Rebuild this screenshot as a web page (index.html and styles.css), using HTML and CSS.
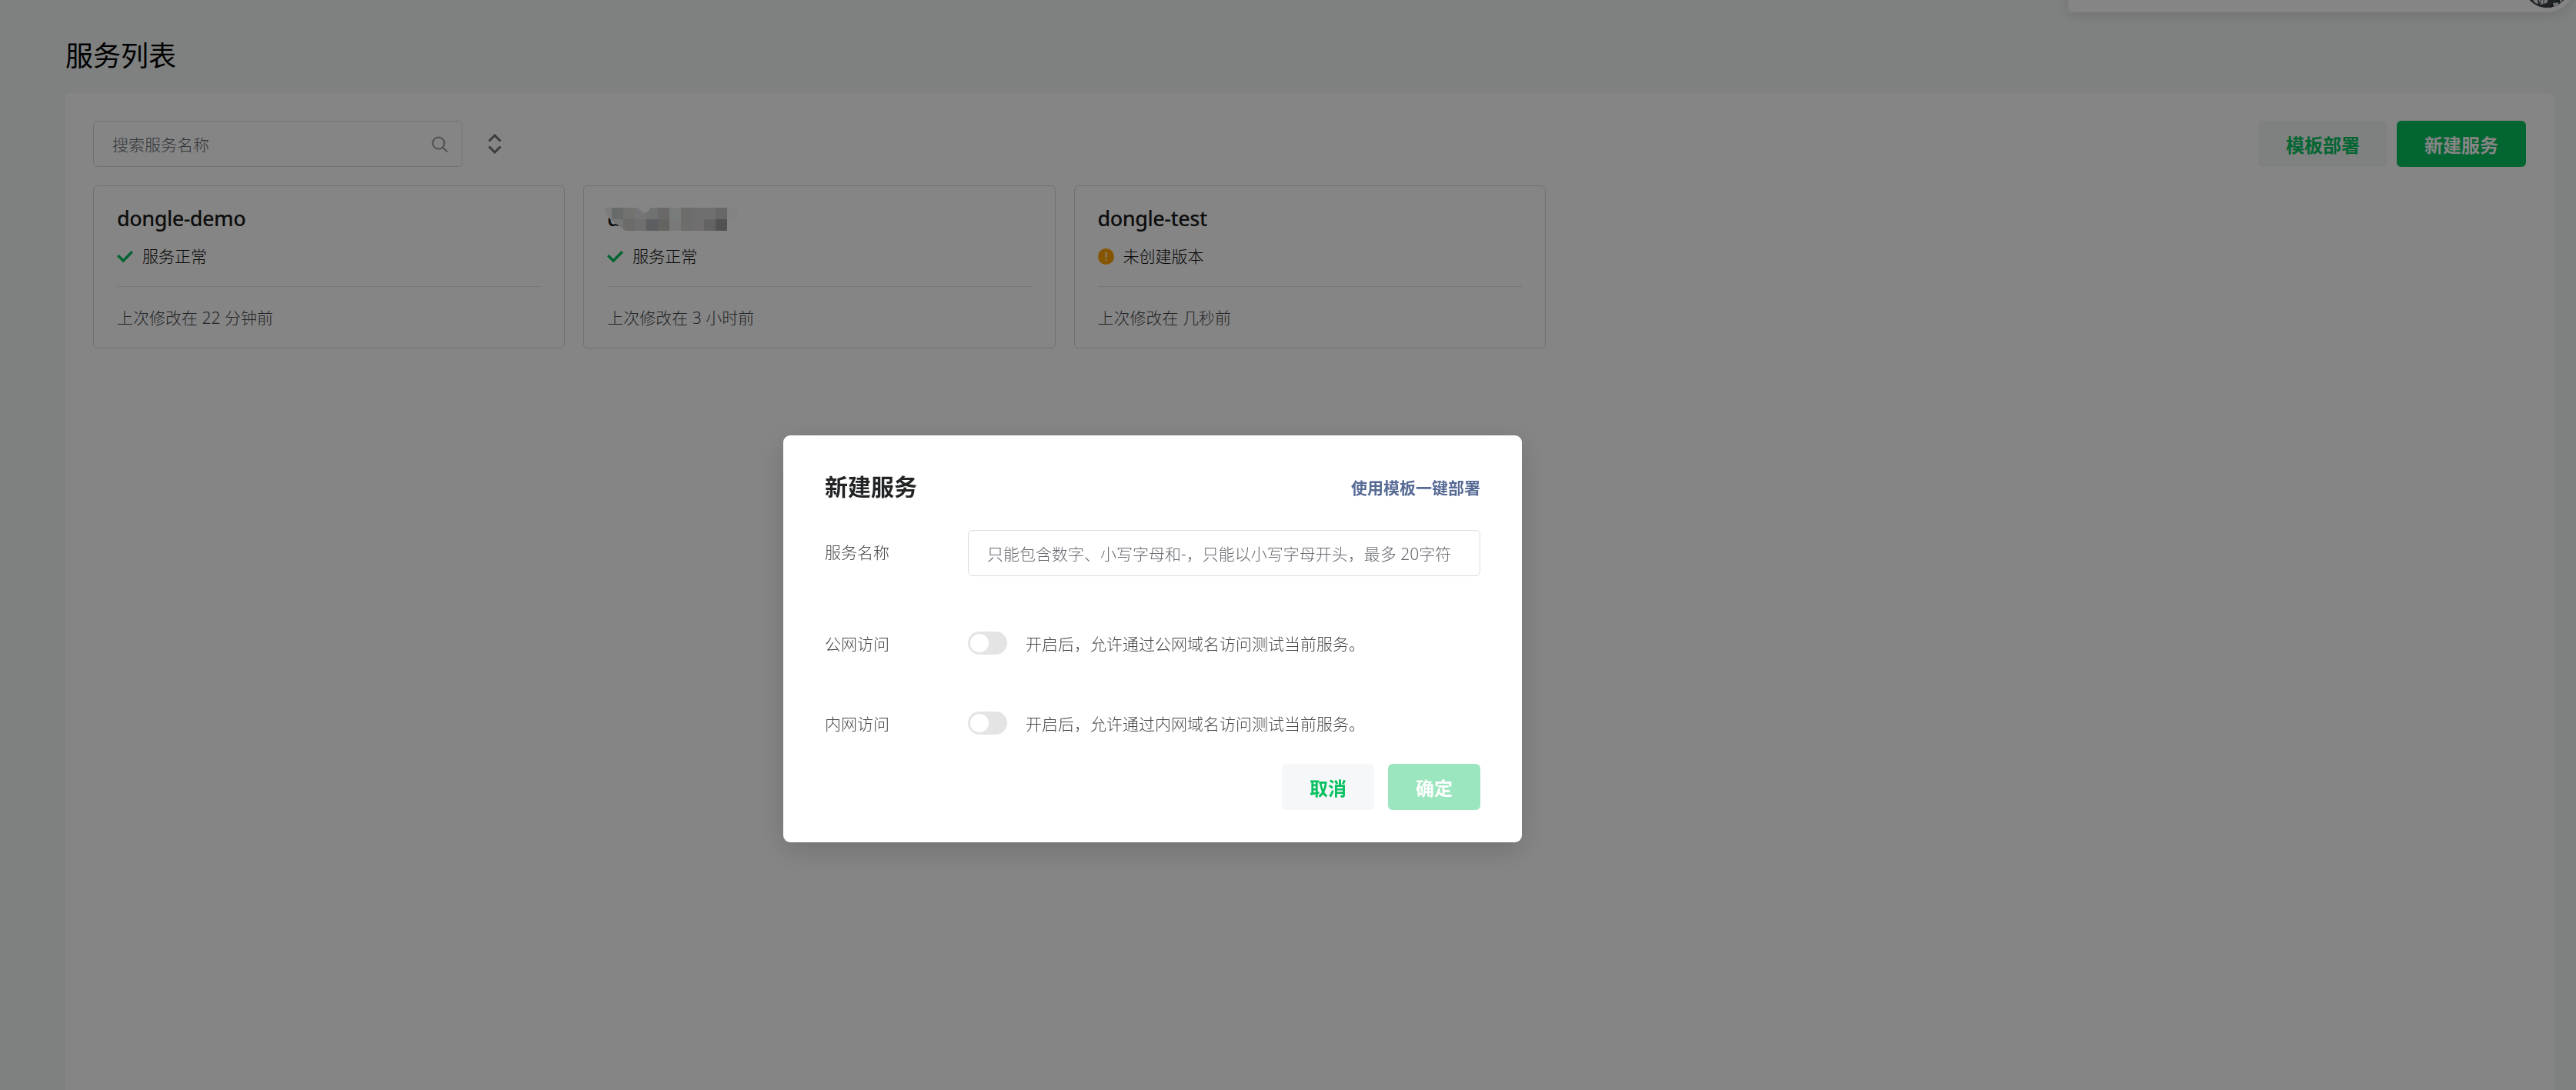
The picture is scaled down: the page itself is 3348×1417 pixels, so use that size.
FILE: index.html
```html
<!DOCTYPE html>
<html lang="zh-CN">
<head>
    <meta charset="UTF-8">
    <meta name="viewport" content="width=device-width, initial-scale=1.0">
    <title>服务列表</title>
    <link rel="stylesheet" href="styles.css">
</head>
<body>
    <div class="user-bar">
        <svg class="avatar" viewBox="0 0 60 60">
            <circle cx="30" cy="30" r="30" fill="#3c444a"/>
            <path d="M12 50h6l1 5-4-1zM19 49h13l-2 5-8 2z" fill="#e4e4e4"/>
            <path d="M22 49v6M26 49v7" stroke="#555" stroke-width="1"/>
            <path d="M33 60q6-8 14-10l-5 8z" fill="#26313a"/>
            <path d="M38 54l7-1v5l-6 1zM47 50l4-1-3 5z" fill="#d5d5de"/>
        </svg>
    </div>

    <header>
        <h1>服务列表</h1>
    </header>
    <main class="panel">
        <div class="toolbar">
            <div class="search">
                <input type="text" placeholder="搜索服务名称">
                <svg class="search-icon" viewBox="0 0 22 22">
                    <circle cx="9" cy="9" r="7.6"/>
                    <path d="M14 14.5l6.5 6"/>
                </svg>
            </div>
            <svg class="sort-icon" viewBox="0 0 18 26">
                <path d="M1.5 9.5L9 2l7.5 7.5M1.5 16.5L9 24l7.5-7.5"/>
            </svg>
            <div class="actions">
                <button class="btn btn-default">模板部署</button>
                <button class="btn btn-primary">新建服务</button>
            </div>
        </div>

        <div class="cards">
            <div class="card">
                <h2>dongle-demo</h2>
                <div class="status">
                    <svg class="status-icon" viewBox="0 0 21 21"><path class="check" d="M1.2 9l7 7L19.8 4.2"/></svg>
                    <span>服务正常</span>
                </div>
                <p class="updated">上次修改在 22 分钟前</p>
            </div>
            <div class="card">
                <h2>do
                    <svg class="mosaic" viewBox="0 0 174 30">
                        <clipPath id="brush"><path d="M0 0h42l8 6h5l5-6h114v16h-15v14H27L8 16 2 9z"/></clipPath>
                        <g clip-path="url(#brush)">
                            <rect x="0" y="0" width="9" height="30" fill="#f0f0f0"/>
                            <rect x="9" y="0" width="15" height="15" fill="#c6cecc"/>
                            <rect x="24" y="0" width="15" height="15" fill="#dbdbd5"/>
                            <rect x="39" y="0" width="15" height="15" fill="#e1e1e1"/>
                            <rect x="54" y="0" width="15" height="15" fill="#d4dbd9"/>
                            <rect x="69" y="0" width="15" height="15" fill="#cacaca"/>
                            <rect x="84" y="0" width="15" height="15" fill="#e6efed"/>
                            <rect x="99" y="0" width="15" height="15" fill="#d2d2ce"/>
                            <rect x="114" y="0" width="30" height="15" fill="#d5d5d5"/>
                            <rect x="144" y="0" width="15" height="15" fill="#c8c8c8"/>
                            <rect x="159" y="0" width="15" height="16" fill="#fcfcfc"/>
                            <rect x="9" y="15" width="15" height="15" fill="#dfe7e5"/>
                            <rect x="24" y="15" width="15" height="15" fill="#d0ceca"/>
                            <rect x="39" y="15" width="15" height="15" fill="#d5d5d5"/>
                            <rect x="54" y="15" width="15" height="15" fill="#b1b5bb"/>
                            <rect x="69" y="15" width="15" height="15" fill="#c4c0bb"/>
                            <rect x="84" y="15" width="15" height="15" fill="#e8e8e8"/>
                            <rect x="99" y="15" width="15" height="15" fill="#d2d2ce"/>
                            <rect x="114" y="15" width="15" height="15" fill="#d9d4d7"/>
                            <rect x="129" y="15" width="15" height="15" fill="#bebebe"/>
                            <rect x="144" y="15" width="15" height="15" fill="#9e9e9e"/>
                        </g>
                    </svg>
                </h2>
                <div class="status">
                    <svg class="status-icon" viewBox="0 0 21 21"><path class="check" d="M1.2 9l7 7L19.8 4.2"/></svg>
                    <span>服务正常</span>
                </div>
                <p class="updated">上次修改在 3 小时前</p>
            </div>
            <div class="card">
                <h2>dongle-test</h2>
                <div class="status">
                    <svg class="status-icon" viewBox="0 0 21 21">
                        <circle cx="10.5" cy="10.5" r="10.5" fill="#ffa300"/>
                        <path d="M10.5 5v7M10.5 14v2" stroke="#fff" stroke-width="1.8" fill="none"/>
                    </svg>
                    <span>未创建版本</span>
                </div>
                <p class="updated">上次修改在 几秒前</p>
            </div>
        </div>
    </main>

    <div class="overlay">
        <div class="dialog">
            <div class="dialog-header">
                <h3>新建服务</h3>
                <a class="template-link">使用模板一键部署</a>
            </div>
            <div class="form-row name-row">
                <label>服务名称</label>
                <input type="text" placeholder="只能包含数字、小写字母和-，只能以小写字母开头，最多 20字符">
            </div>
            <div class="form-row">
                <label>公网访问</label>
                <span class="switch"></span>
                <span class="hint">开启后，允许通过公网域名访问测试当前服务。</span>
            </div>
            <div class="form-row">
                <label>内网访问</label>
                <span class="switch"></span>
                <span class="hint">开启后，允许通过内网域名访问测试当前服务。</span>
            </div>
            <div class="dialog-footer">
                <button class="btn btn-default">取消</button>
                <button class="btn btn-primary disabled">确定</button>
            </div>
        </div>
    </div>
</body>
</html>
```
FILE: styles.css
```css
* {
    box-sizing: border-box;
}
body {
    margin: 0;
    height: 1417px;
    overflow: hidden;
    padding: 0 29px 0 85px;
    display: flex;
    flex-direction: column;
    background-color: #f4f8f6;
    color: #1a1a1a;
    font-family: "Noto Sans", "Noto Sans CJK SC", sans-serif;
    font-size: 21px;
    font-weight: 300;
}
h1, h2, h3, p {
    margin: 0;
}
input, button {
    font-family: inherit;
}
.user-bar {
    position: absolute;
    top: -56px;
    right: 2px;
    width: 658px;
    height: 72px;
    padding: 6px;
    display: flex;
    justify-content: flex-end;
    background-color: #fff;
    border-radius: 5px 36px 36px 5px;
    box-shadow: 0 4px 18px rgba(0, 0, 0, 0.12);
}
.avatar {
    width: 60px;
    height: 60px;
}
header {
    height: 121px;
    padding-top: 47px;
}
h1 {
    font-size: 36px;
    font-weight: 400;
    line-height: 52px;
    color: #000;
}
.panel {
    flex: 1;
    padding: 36px;
    background-color: #fff;
    border-radius: 6px 6px 0 0;
}
.toolbar {
    display: flex;
    align-items: center;
    margin-bottom: 24px;
}
.search {
    position: relative;
    width: 480px;
}
input {
    width: 100%;
    height: 60px;
    padding: 2px 24px 0;
    border: 1px solid #dcdddf;
    border-radius: 6px;
    background-color: #fff;
    font-size: 21px;
    font-weight: 300;
}
input::placeholder {
    color: #66696f;
    opacity: 1;
}
.search-icon {
    position: absolute;
    top: 20px;
    right: 18px;
    width: 22px;
    height: 22px;
    fill: none;
    stroke: #9a9a9a;
    stroke-width: 2;
}
.sort-icon {
    width: 18px;
    height: 26px;
    margin-left: 33px;
    fill: none;
    stroke: #767676;
    stroke-width: 3;
}
.actions {
    display: flex;
    gap: 12px;
    margin-left: auto;
}
.btn {
    height: 60px;
    padding: 0 36px;
    border: none;
    border-radius: 6px;
    font-size: 24px;
    font-weight: 700;
}
.btn-default {
    background-color: #f6f7f9;
    color: #07c160;
}
.toolbar .btn-default {
    background-color: #f4f8f6;
}
.btn-primary {
    background-color: #07c160;
    color: #fff;
}
.btn-primary.disabled {
    background-color: #9ce6bf;
}
.cards {
    display: grid;
    grid-template-columns: repeat(3, 613.3px);
    gap: 24px;
}
.card {
    height: 212px;
    padding: 24px 30px;
    border: 1px solid #d8d9da;
    border-radius: 6px;
}
h2 {
    position: relative;
    font-size: 27px;
    font-weight: 500;
    line-height: 36px;
    letter-spacing: -0.5px;
}
.mosaic {
    position: absolute;
    top: 4px;
    left: -3px;
    width: 174px;
    height: 30px;
}
.status {
    display: flex;
    align-items: center;
    gap: 12px;
    height: 30px;
    margin-top: 16px;
    color: #0c0c0e;
}
.status span {
    margin-top: -3px;
}
.status-icon {
    width: 21px;
    height: 21px;
}
.check {
    fill: none;
    stroke: #07c160;
    stroke-width: 3.4;
}
.updated {
    margin-top: 24px;
    padding-top: 25px;
    border-top: 1px solid #e2e3e4;
    line-height: 30px;
    color: #45484e;
}
.overlay {
    position: fixed;
    inset: 0;
    display: flex;
    background-color: rgba(0, 0, 0, 0.48);
}
.dialog {
    width: 960px;
    height: 529px;
    margin: 566px 0 0 1018px;
    padding: 42px 54px;
    background-color: #fff;
    border-radius: 9px;
    box-shadow: 0 10px 36px rgba(0, 0, 0, 0.16);
}
.dialog-header {
    display: flex;
    justify-content: space-between;
    align-items: center;
    height: 48px;
}
h3 {
    padding-bottom: 3px;
    font-size: 30px;
    font-weight: 700;
    color: #222426;
}
.template-link {
    padding-top: 2px;
    color: #576b95;
    font-weight: 700;
}
.form-row {
    display: flex;
    align-items: center;
    height: 30px;
    margin-bottom: 74px;
    color: #484848;
}
.form-row label {
    width: 186px;
    flex-shrink: 0;
}
.name-row {
    height: 60px;
    margin: 33px 0 72px;
}
.name-row label {
    padding-bottom: 4px;
}
.switch {
    width: 51px;
    height: 30px;
    padding: 3px;
    margin-right: 24px;
    background-color: #e4e4e4;
    border-radius: 15px;
}
.switch::before {
    content: "";
    display: block;
    width: 24px;
    height: 24px;
    border-radius: 50%;
    background-color: #fff;
}
.dialog-footer {
    display: flex;
    justify-content: flex-end;
    gap: 18px;
    margin-top: -36px;
}
```
